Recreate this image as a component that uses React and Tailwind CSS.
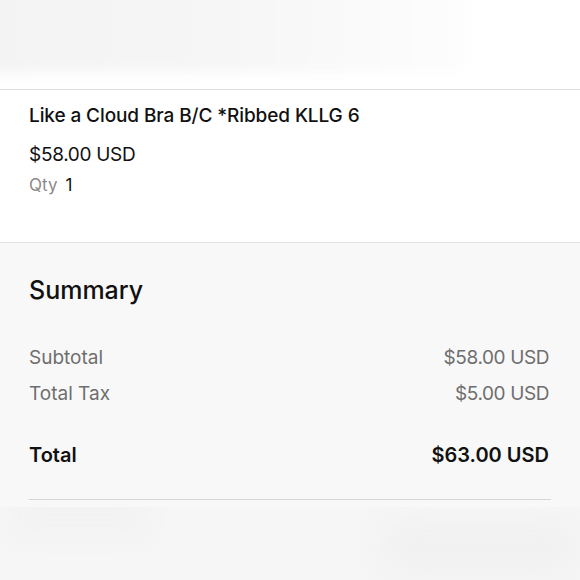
import React from "react";

export default function App() {
  return (
    <div className="w-[580px] h-[580px] overflow-hidden bg-white text-[#111]" style={{ fontFamily: "Inter, 'Noto Sans', sans-serif" }}>
      {/* blurred top area */}
      <div className="h-[89px] bg-white relative overflow-hidden">
        <div className="absolute left-[-20px] top-[-20px] w-[485px] h-[92px] bg-gradient-to-r from-[#f3f3f3] via-[#f6f6f6] to-[#fdfdfd] blur-[6px]" />
      </div>
      <div className="border-t border-[#dcdcdc]" />
      {/* item */}
      <div className="bg-white pt-[13px] px-[29px] h-[152px] flex flex-col">
        <div className="text-[19px] leading-[25px] font-medium tracking-[-0.1px]">Like a Cloud Bra B/C *Ribbed KLLG 6</div>
        <div className="mt-[14px] text-[19px] leading-[26px] tracking-[-0.3px]">$58.00 USD</div>
        <div className="mt-[6px] text-[17px] leading-[22px] flex gap-[8px]">
          <span className="text-[#8a8a8a]">Qty</span>
          <span>1</span>
        </div>
      </div>
      <div className="border-t border-[#e2e2e2]" />
      {/* summary */}
      <div className="bg-[#f8f8f8] pt-[31px] px-[29px] h-[264px]">
        <div className="text-[25px] leading-[32px] font-medium">Summary</div>
        <div className="mt-[39px] flex flex-col gap-[10px] text-[19px] leading-[26px] text-[#6e6e6e] pr-[2px]">
          <div className="flex justify-between">
            <span>Subtotal</span>
            <span className="tracking-[-0.4px]">$58.00 USD</span>
          </div>
          <div className="flex justify-between">
            <span>Total Tax</span>
            <span className="tracking-[-0.4px]">$5.00 USD</span>
          </div>
        </div>
        <div className="mt-[34px] flex justify-between text-[20px] leading-[28px] font-semibold pr-[2px]">
          <span>Total</span>
          <span>$63.00 USD</span>
        </div>
        <div className="mt-[30px] border-t border-[#d6d6d6]" />
      </div>
      <div className="h-[80px] bg-[#f6f6f6] relative overflow-hidden">
        <div className="absolute left-[380px] top-[10px] w-[200px] h-[60px] rounded-full bg-[#f1f1f1] blur-[12px]" />
        <div className="absolute left-[10px] top-[-10px] w-[140px] h-[40px] rounded-full bg-[#f2f2f2] blur-[10px]" />
      </div>
    </div>
  );
}
